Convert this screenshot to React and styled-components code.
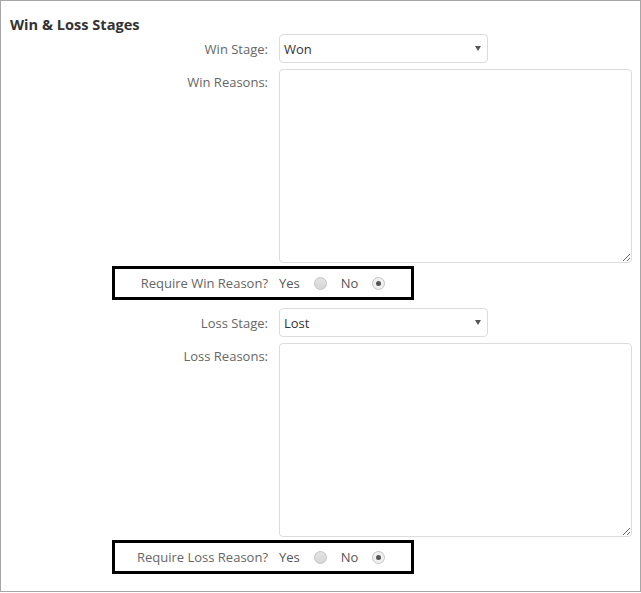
import React from 'react';
import styled, { createGlobalStyle } from 'styled-components';

const GlobalStyle = createGlobalStyle`
  body {
    margin: 0;
    background: #fff;
    font-family: 'Open Sans', 'Liberation Sans', sans-serif;
  }
`;

const Frame = styled.div`
  width: 641px;
  height: 592px;
  box-sizing: border-box;
  border: 1px solid #a6a6a6;
  background: #fff;
`;

const Title = styled.h3`
  margin: 0;
  padding: 14px 0 0 9px;
  font-size: 14.6px;
  line-height: 18px;
  font-weight: 700;
  color: #333;
`;

const Form = styled.div`
  display: flex;
  flex-direction: column;
  margin-top: 1px;
`;

const FieldRow = styled.div`
  display: flex;
  align-items: ${(p) => (p.top ? 'flex-start' : 'center')};
  gap: 11px;
  margin-bottom: ${(p) => p.after || 0}px;
`;

const Label = styled.label`
  flex-shrink: 0;
  width: ${(p) => p.w || 267}px;
  padding-top: ${(p) => (p.top ? 4 : 0)}px;
  text-align: right;
  font-size: 13px;
  line-height: 18px;
  color: #666;
`;

const SelectBox = styled.div`
  position: relative;
  width: 209px;
  height: 29px;
  box-sizing: border-box;
  border: 1px solid #dcdcdc;
  border-radius: 4px;
  background: #fff;
  display: flex;
  align-items: center;
  padding-left: 4px;
  font-size: 13px;
  color: #333;
`;

const Caret = styled.span`
  position: absolute;
  right: 6px;
  top: 11px;
  width: 0;
  height: 0;
  border-left: 3px solid transparent;
  border-right: 3px solid transparent;
  border-top: 5px solid #555;
`;

const TextArea = styled.textarea`
  display: block;
  width: 353px;
  height: 194px;
  box-sizing: border-box;
  margin: 0;
  border: 1px solid #dcdcdc;
  border-radius: 4px;
  background: #fff;
  resize: both;
  outline: none;
`;

const Highlight = styled.div`
  display: flex;
  align-items: center;
  gap: 11px;
  margin-left: 111px;
  width: 302px;
  height: 34px;
  box-sizing: border-box;
  border: 3px solid #000;
  margin-top: ${(p) => p.before || 0}px;
  margin-bottom: ${(p) => p.after || 0}px;
`;

const Options = styled.div`
  display: flex;
  align-items: center;
  gap: 14px;
  font-size: 13px;
  line-height: 18px;
  color: #555;
`;

const Radio = styled.span`
  position: relative;
  width: 13px;
  height: 13px;
  box-sizing: border-box;
  border-radius: 50%;
  border: 1px solid #c4c4c4;
  background: ${(p) => (p.checked ? '#f0f0f0' : 'linear-gradient(#e4e4e4, #d6d6d6)')};
  &::after {
    content: '';
    display: ${(p) => (p.checked ? 'block' : 'none')};
    position: absolute;
    left: 3px;
    top: 3px;
    width: 5px;
    height: 5px;
    border-radius: 50%;
    background: #555;
  }
`;

const stages = [
  { stage: 'Win Stage:', value: 'Won', reasons: 'Win Reasons:', require: 'Require Win Reason?' },
  { stage: 'Loss Stage:', value: 'Lost', reasons: 'Loss Reasons:', require: 'Require Loss Reason?' },
];

export default function App() {
  return (
    <>
      <GlobalStyle />
      <Frame>
        <Title>Win &amp; Loss Stages</Title>
        <Form>
          {stages.map((s, i) => (
            <React.Fragment key={s.stage}>
              <FieldRow after={6}>
                <Label>{s.stage}</Label>
                <SelectBox>
                  {s.value}
                  <Caret />
                </SelectBox>
              </FieldRow>
              <FieldRow top>
                <Label top>{s.reasons}</Label>
                <TextArea />
              </FieldRow>
              <Highlight before={3} after={i === 0 ? 8 : 0}>
                <Label w={153}>{s.require}</Label>
                <Options>
                  <span>Yes</span>
                  <Radio />
                  <span>No</span>
                  <Radio checked />
                </Options>
              </Highlight>
            </React.Fragment>
          ))}
        </Form>
      </Frame>
    </>
  );
}
